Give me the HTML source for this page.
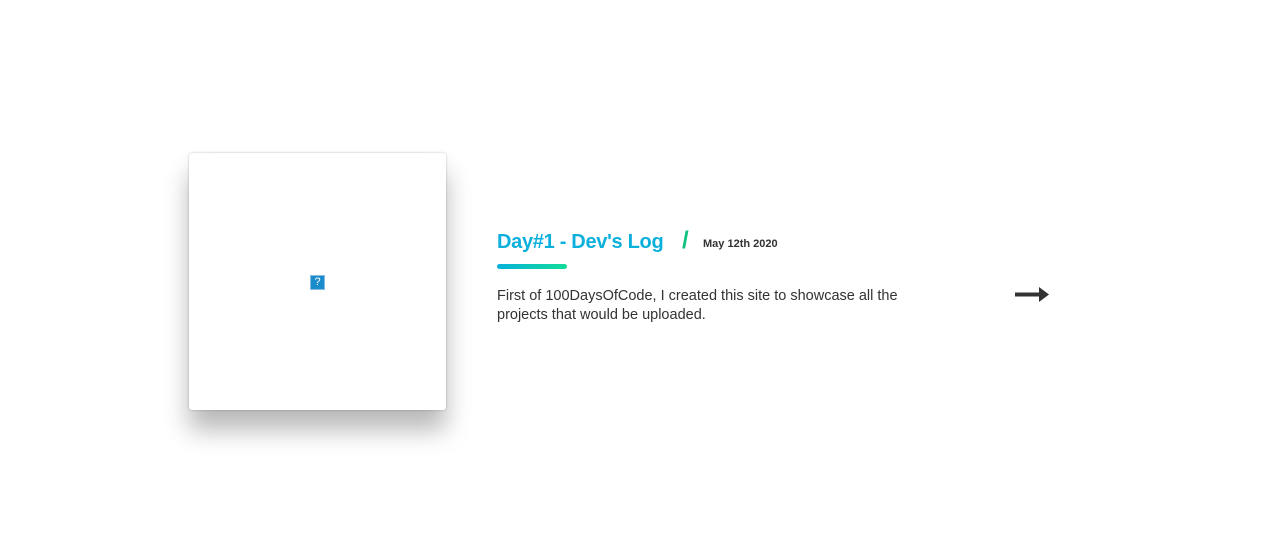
<!DOCTYPE html>
<html><head><style>
body{margin:0;width:1270px;height:554px;background:#fff;position:relative;overflow:hidden;font-family:"Liberation Sans",sans-serif}
.card{position:absolute;left:189px;top:153px;width:257px;height:257px;background:#fff;border-radius:3px;box-shadow:0 20px 25px rgba(0,0,0,0.28),0 0 2px rgba(0,0,0,0.25)}
.q{position:absolute;left:121px;top:122px;width:15px;height:15px;background:#1a8ccc;border:1px solid #8bbbe0;box-sizing:border-box;color:#fff;font-size:11px;line-height:13px;text-align:center}
.t{position:absolute;left:497px;top:231px;font-size:20px;font-weight:bold;color:#0cb0dc;letter-spacing:-0.3px}
.s{position:absolute;left:682px;top:227px;font-size:24px;font-weight:bold;color:#12c080}
.d{position:absolute;left:703px;top:238px;font-size:11px;font-weight:bold;color:#333}
.bar{position:absolute;left:497px;top:264px;width:70px;height:5px;border-radius:3px;background:linear-gradient(90deg,#07b2dc,#12dc98)}
.p{position:absolute;left:497px;top:287px;width:470px;font-size:14.5px;line-height:19px;color:#333}
</style></head><body>
<div class="card"><div class="q">?</div></div>
<div class="t">Day#1 - Dev's Log</div>
<div class="s">/</div>
<div class="d">May 12th 2020</div>
<div class="bar"></div>
<div class="p">First of 100DaysOfCode, I created this site to showcase all the<br>projects that would be uploaded.</div>
<svg style="position:absolute;left:1015px;top:286px" width="35" height="17"><rect x="0" y="6.5" width="26" height="4" fill="#333"/><path d="M24 1 L34 8.5 L24 16Z" fill="#333"/></svg>
</body></html>
